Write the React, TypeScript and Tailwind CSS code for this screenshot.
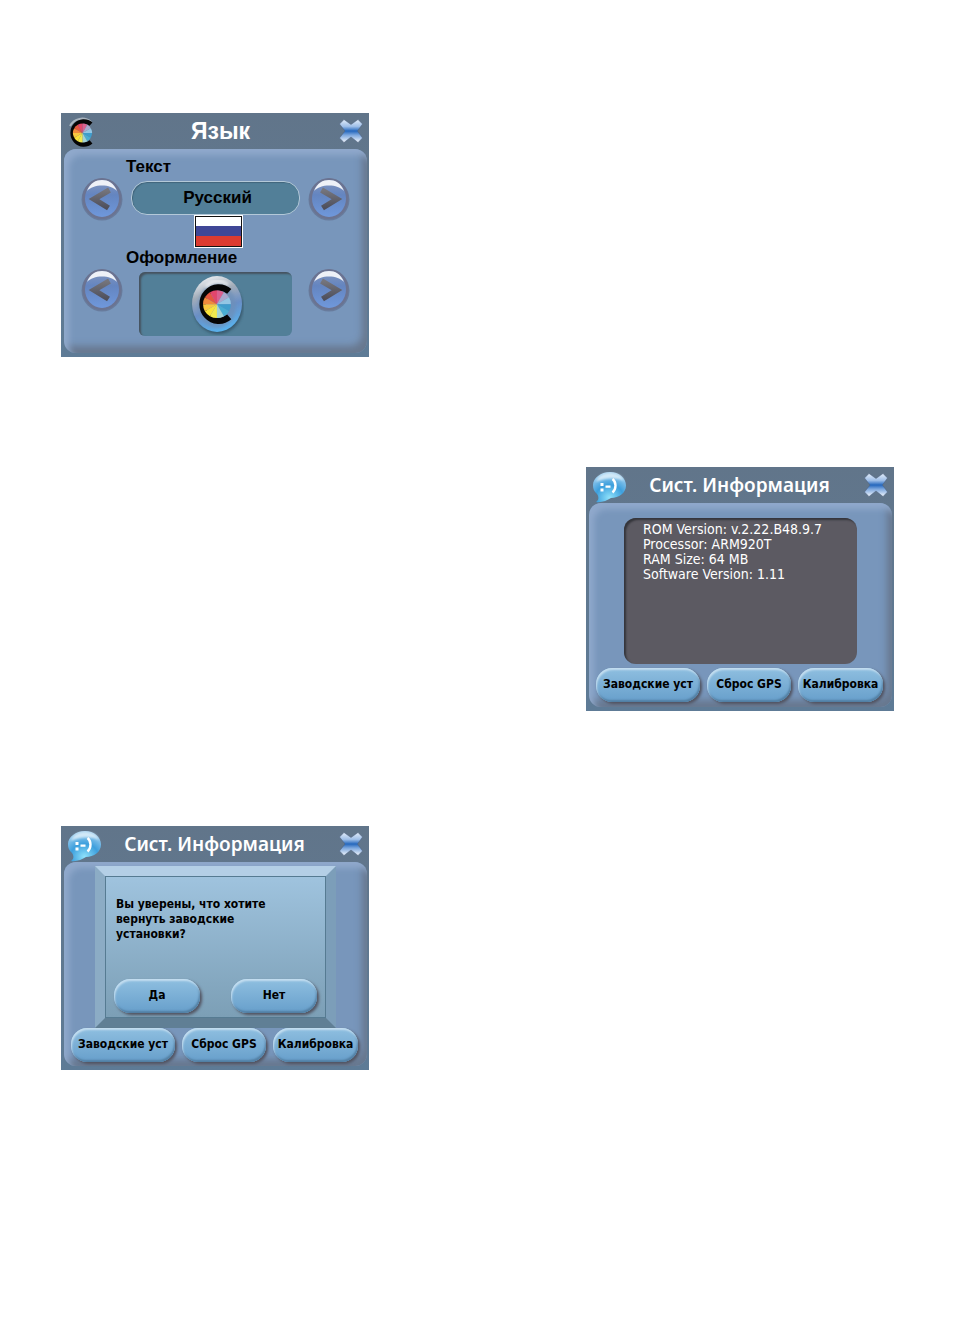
import type { ReactNode } from "react";

const WHEEL = [
  "#d9608f",
  "#a9a6cc",
  "#93c6e4",
  "#3f9dcc",
  "#4aaed2",
  "#a3d3d4",
  "#f1e94e",
  "#f9e23a",
  "#f8c840",
  "#ef8a3c",
  "#e5573f",
  "#e2466c",
];

const FACTS = [
  "ROM Version: v.2.22.B48.9.7",
  "Processor: ARM920T",
  "RAM Size: 64 MB",
  "Software Version: 1.11",
];

function wedge(index: number, cx: number, cy: number, r: number) {
  const a = ((index * 30 - 90) * Math.PI) / 180;
  const b = (((index + 1) * 30 - 90) * Math.PI) / 180;
  return `M${cx} ${cy}L${cx + r * Math.cos(a)} ${cy + r * Math.sin(a)}A${r} ${r} 0 0 1 ${cx + r * Math.cos(b)} ${cy + r * Math.sin(b)}Z`;
}

function ColorMark() {
  return (
    <>
      <path
        d="M25 7.200A11.200 11.500 0 1 0 25 24.800"
        fill="none"
        stroke="#050505"
        strokeWidth="4.4"
      />
      {WHEEL.map((color, index) => (
        <path key={index} d={wedge(index, 16.5, 16, 9.6)} fill={color} />
      ))}
    </>
  );
}

function ThemeIcon() {
  return (
    <svg viewBox="0 0 32 32" className="h-8 w-8" aria-hidden="true">
      <path
        d="M25 5A13.6 13.6 0 0 0 4 9"
        fill="none"
        stroke="#a9b4be"
        strokeWidth="2"
      />
      <ColorMark />
    </svg>
  );
}

function ThemeBadge() {
  return (
    <svg viewBox="0 0 56 62" className="h-[62px] w-14" aria-hidden="true">
      <defs>
        <linearGradient id="badge" x1="0.3" y1="0" x2="0.6" y2="1">
          <stop offset="0" stopColor="#eceff3" />
          <stop offset="0.3" stopColor="#a3adb9" />
          <stop offset="0.6" stopColor="#6a8fc6" />
          <stop offset="1" stopColor="#58b4f0" />
        </linearGradient>
        <filter id="badgeShade" x="-20%" y="-20%" width="140%" height="140%">
          <feGaussianBlur stdDeviation="1.5" />
        </filter>
        <filter id="badgeSoft">
          <feGaussianBlur stdDeviation="1.6" />
        </filter>
      </defs>
      <ellipse cx="30" cy="34" rx="25" ry="27" fill="#2c4658" opacity="0.7" filter="url(#badgeShade)" />
      <ellipse cx="29" cy="31" rx="25" ry="28" fill="url(#badge)" />
      <ellipse cx="29" cy="33" rx="19" ry="22" fill="#6d8fb8" opacity="0.7" filter="url(#badgeSoft)" />
      <path
        d="M18 14C24 7 34 7 40 12"
        fill="none"
        stroke="#fff"
        strokeWidth="3"
        opacity="0.7"
        filter="url(#badgeSoft)"
      />
      <g transform="translate(5 8) scale(1.45)">
        <ColorMark />
      </g>
    </svg>
  );
}

function ChatIcon() {
  return (
    <svg viewBox="0 0 36 32" className="h-8 w-9" aria-hidden="true">
      <defs>
        <radialGradient id="bubble" cx="0.5" cy="0.85" r="0.85">
          <stop offset="0" stopColor="#8fe2fb" />
          <stop offset="0.5" stopColor="#3d9fdd" />
          <stop offset="1" stopColor="#a9d3f0" />
        </radialGradient>
        <filter id="bubbleSoft">
          <feGaussianBlur stdDeviation="0.8" />
        </filter>
      </defs>
      <path
        d="M19 1C28 1 35 7 35 14.500S28 27 20 27C16 29.500 10 32 5 31C8 29 8 26 6 23C3 20.500 2 18 2 14C2 7 10 1 19 1Z"
        fill="url(#bubble)"
      />
      <path
        d="M5 11C7 4 13 2 19 2S31 4 33 10C27 6 12 7 5 11Z"
        fill="#e3f2fb"
        opacity="0.8"
        filter="url(#bubbleSoft)"
      />
      <path d="M9.500 12h3v3h-3zM9.500 17.500h3v3h-3zM14.500 14.500h5v2.200h-5z" fill="#fff" />
      <path d="M21.500 8C25.500 11 25.500 18 21.500 21.500" fill="none" stroke="#fff" strokeWidth="2.4" />
    </svg>
  );
}

function CloseButton() {
  return (
    <button type="button" aria-label="Закрыть" className="h-6 w-6">
      <svg viewBox="0 0 24 24" className="h-6 w-6" aria-hidden="true">
        <defs>
          <linearGradient id="cross" x1="0" y1="0" x2="0" y2="1">
            <stop offset="0" stopColor="#e3edf9" />
            <stop offset="0.3" stopColor="#9fbfe8" />
            <stop offset="0.5" stopColor="#2467bd" />
            <stop offset="0.68" stopColor="#7ea8de" />
            <stop offset="1" stopColor="#f4f8fd" />
          </linearGradient>
        </defs>
        <path
          d="M5 0.500L12 5.500L19 0.500L23.500 5L18.500 12L23.500 19L19 23.500L12 18L5 23.500L0.500 19L6 12L0.500 5Z"
          fill="url(#cross)"
          stroke="#4e6280"
          strokeWidth="0.5"
        />
      </svg>
    </button>
  );
}

function ArrowButton({ label, flip = false }: { label: string; flip?: boolean }) {
  return (
    <button type="button" aria-label={label} className="h-[42px] w-[42px] shrink-0">
      <svg viewBox="0 0 42 44" className="h-[44px] w-[42px]" aria-hidden="true">
        <defs>
          <linearGradient id="knob" x1="0" y1="0" x2="0" y2="1">
            <stop offset="0" stopColor="#8496bd" />
            <stop offset="0.4" stopColor="#6485c0" />
            <stop offset="1" stopColor="#6f98dc" />
          </linearGradient>
          <linearGradient id="chevron" x1="0" y1="0" x2="0" y2="1">
            <stop offset="0" stopColor="#75757c" />
            <stop offset="1" stopColor="#4e4f5c" />
          </linearGradient>
          <filter id="knobSoft">
            <feGaussianBlur stdDeviation="0.7" />
          </filter>
        </defs>
        <ellipse cx="21" cy="22.500" rx="20.500" ry="21" fill="#5f6a88" opacity="0.6" filter="url(#knobSoft)" />
        <ellipse cx="21" cy="21.500" rx="19.500" ry="20.500" fill="#6b7391" />
        <ellipse cx="21" cy="21.500" rx="17" ry="18.500" fill="url(#knob)" />
        <path
          d="M6 14C9 6 15 3 21 3S33 6 36 14C30 6.500 12 6.500 6 14Z"
          fill="#eef1f7"
          filter="url(#knobSoft)"
        />
        <path
          d={flip ? "M13.500 13L29 22L14.500 31" : "M28.500 13L13 22L27.500 31"}
          fill="none"
          stroke="url(#chevron)"
          strokeWidth="5.500"
        />
      </svg>
    </button>
  );
}

function RussianFlag() {
  return (
    <svg viewBox="0 0 49 33" className="h-[33px] w-[49px]" role="img" aria-label="Флаг России">
      <path fill="#fff" d="M0 0h49v33H0z" />
      <path fill="#111" d="M1 1h47v31H1z" />
      <path fill="#fff" d="M2 2h45v10H2z" />
      <path fill="#3f4796" d="M2 11h45v11H2z" />
      <path fill="#dc3b30" d="M2 21h45v10H2z" />
    </svg>
  );
}

type ScreenProps = {
  title: string;
  icon: ReactNode;
  titleClass: string;
  children: ReactNode;
};

function Screen({ title, icon, titleClass, children }: ScreenProps) {
  return (
    <section className="flex min-h-61 w-77 max-w-full flex-col bg-linear-to-b from-[#61758a] to-[#5e7b96] pr-0.5 pb-1 pl-[3px]">
      <header className="flex h-9 items-center justify-between pr-1 pl-0.5">
        <div className="flex w-9 justify-start pt-1">{icon}</div>
        <h2 className={titleClass}>{title}</h2>
        <div className="flex w-9 justify-end">
          <CloseButton />
        </div>
      </header>
      <div className="flex flex-1 flex-col rounded-xl bg-[#7896bb] shadow-[inset_5px_6px_6px_#90a9cc,inset_-5px_-7px_7px_#68788f]">
        {children}
      </div>
    </section>
  );
}

function PillButton({ className, children }: { className: string; children: ReactNode }) {
  return (
    <button
      type="button"
      className={`h-[34px] rounded-2xl bg-linear-to-b from-[#8fbfe0] to-[#679fcb] pb-0.5 font-['DejaVu_Sans_Condensed','DejaVu_Sans',sans-serif] text-xs font-bold whitespace-nowrap text-black shadow-[inset_1px_2px_2px_#c4def0,inset_-1px_-2px_2px_#527fa3,2px_2px_3px_#51525f] ${className}`}
    >
      {children}
    </button>
  );
}

function SystemActions() {
  return (
    <div className="flex justify-between pr-[9px] pl-[7px]">
      <PillButton className="w-[104px]">Заводские уст</PillButton>
      <PillButton className="w-[84px]">Сброс GPS</PillButton>
      <PillButton className="w-[85px]">Калибровка</PillButton>
    </div>
  );
}

const systemTitle =
  "font-['Noto_Sans',sans-serif] text-[19px] leading-6 font-semibold whitespace-nowrap text-white";

function LanguageScreen() {
  return (
    <Screen
      title="Язык"
      icon={<ThemeIcon />}
      titleClass="pl-3 font-['Liberation_Sans',Arial,sans-serif] text-[23px] leading-6 font-bold text-white"
    >
      <div className="px-[17px] pt-2 pb-4 font-['Liberation_Sans',Arial,sans-serif] text-[17px] leading-5 font-bold text-black">
        <h3 className="pl-[45px]">Текст</h3>
        <div className="flex items-center gap-2">
          <ArrowButton label="Предыдущий язык" />
          <div className="flex h-[34px] flex-1 items-center justify-center rounded-2xl border border-[#b3c8d8] bg-[#527f98] pl-1 shadow-[inset_1px_1px_1px_#41657c]">
            Русский
          </div>
          <ArrowButton label="Следующий язык" flip />
        </div>
        <div className="-mt-1 flex justify-center pl-1.5">
          <RussianFlag />
        </div>
        <h3 className="pl-[45px]">Оформление</h3>
        <div className="flex items-start gap-4">
          <ArrowButton label="Предыдущее оформление" />
          <div className="mt-1 flex h-16 flex-1 items-center justify-center rounded-md bg-[#527f98] shadow-[inset_2px_2px_2px_#46535f]">
            <ThemeBadge />
          </div>
          <ArrowButton label="Следующее оформление" flip />
        </div>
      </div>
    </Screen>
  );
}

function SystemInfoScreen() {
  return (
    <Screen title="Сист. Информация" icon={<ChatIcon />} titleClass={systemTitle}>
      <div className="px-[35px] pt-[15px] pb-1">
        <ul className="min-h-[146px] rounded-xl bg-[#5c5a62] pt-1 pl-[19px] font-['DejaVu_Sans_Condensed','DejaVu_Sans',sans-serif] text-sm leading-[15px] text-white shadow-[inset_2px_2px_2px_#34353b]">
          {FACTS.map((fact) => (
            <li key={fact}>{fact}</li>
          ))}
        </ul>
      </div>
      <SystemActions />
    </Screen>
  );
}

function ResetScreen() {
  return (
    <Screen title="Сист. Информация" icon={<ChatIcon />} titleClass={systemTitle}>
      <div className="px-[31px] pt-1">
        <div
          role="alertdialog"
          aria-labelledby="reset-question"
          className="border-[10px] border-t-[#b4cfe6] border-r-[#7c9eb9] border-b-[#607f95] border-l-[#8cacc5]"
        >
          <div className="flex min-h-[142px] flex-col justify-between border border-[#567b92] bg-linear-to-b from-[#9fc3de] to-[#7c9fb6] px-2 pt-5 pb-1">
            <p
              id="reset-question"
              className="max-w-44 pl-0.5 font-['DejaVu_Sans_Condensed','DejaVu_Sans',sans-serif] text-xs leading-[15px] font-bold text-black"
            >
              Вы уверены, что хотите вернуть заводские установки?
            </p>
            <div className="flex justify-between">
              <PillButton className="w-[86px]">Да</PillButton>
              <PillButton className="w-[86px]">Нет</PillButton>
            </div>
          </div>
        </div>
      </div>
      <SystemActions />
    </Screen>
  );
}

export default function App() {
  return (
    <main className="flex min-h-screen flex-col bg-white pt-[113px] pr-[60px] pl-[61px]">
      <LanguageScreen />
      <div className="mt-[110px] flex justify-end">
        <SystemInfoScreen />
      </div>
      <div className="mt-[115px]">
        <ResetScreen />
      </div>
    </main>
  );
}
